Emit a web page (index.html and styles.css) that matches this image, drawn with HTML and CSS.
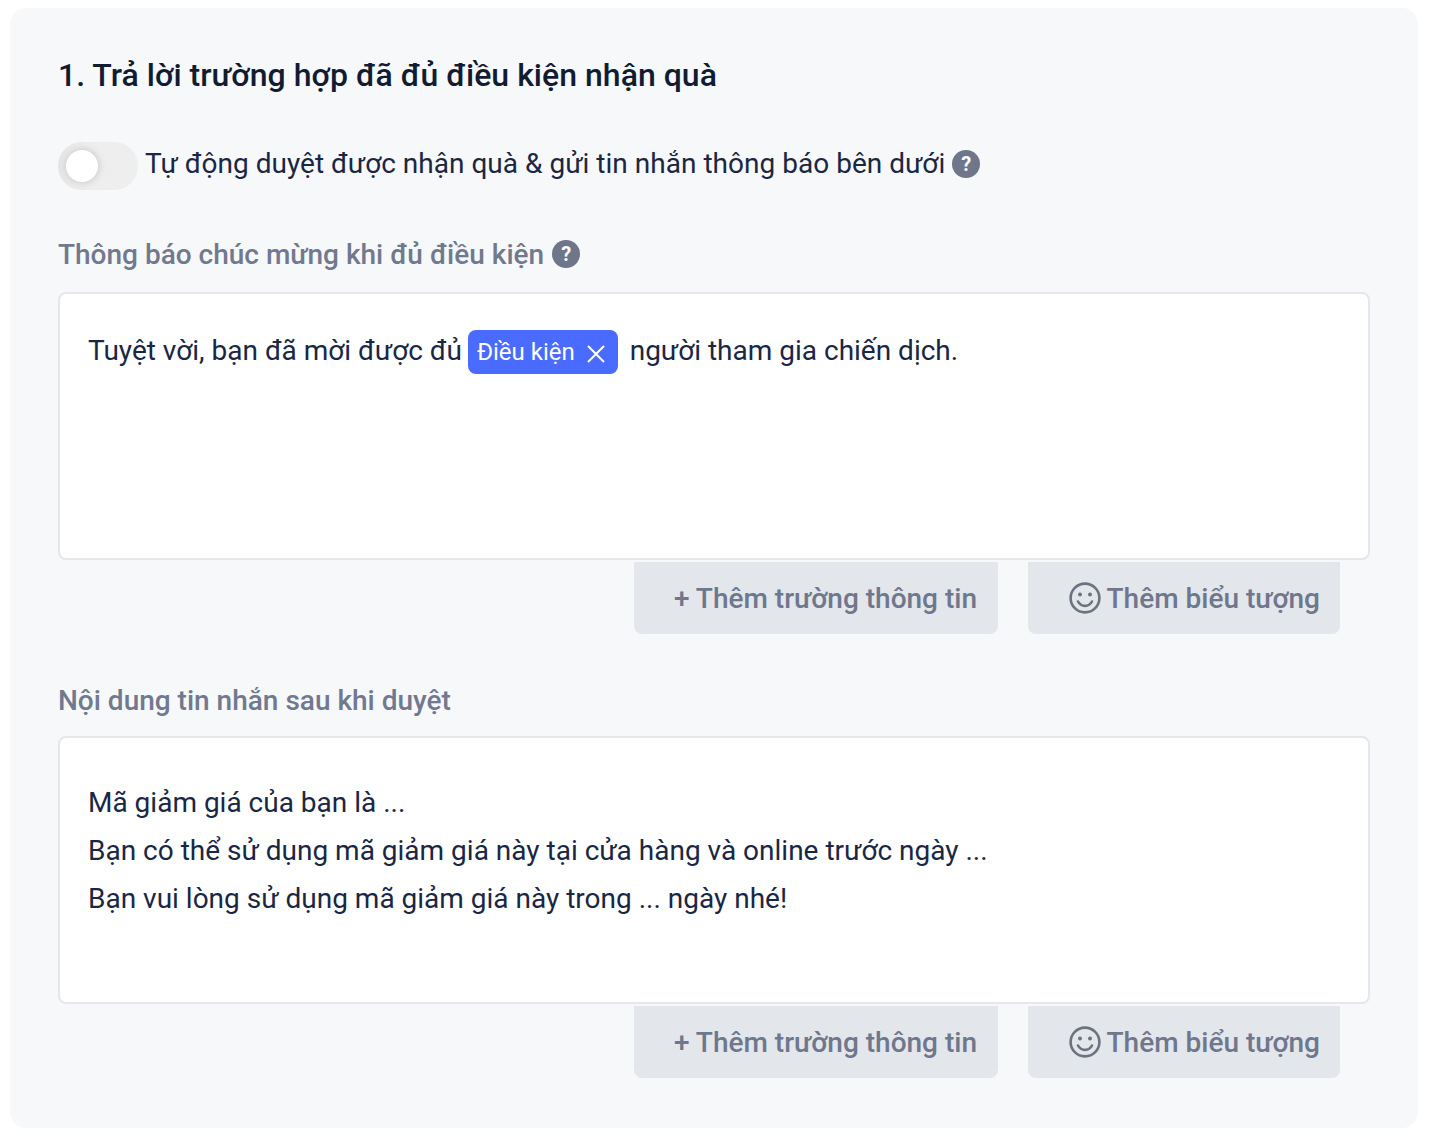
FILE: index.html
```html
<!DOCTYPE html>
<html lang="vi">
<head>
<meta charset="utf-8">
<title>Trả lời</title>
<link rel="stylesheet" href="styles.css">
</head>
<body>
<section class="card">
  <h2 class="title">1. Trả lời trường hợp đã đủ điều kiện nhận quà</h2>
  <div class="toggle-row">
    <span class="toggle"><span class="knob"></span></span>
    <span class="toggle-text">Tự động duyệt được nhận quà &amp; gửi tin nhắn thông báo bên dưới</span>
    <span class="help">?</span>
  </div>
  <div class="label label-first"><span>Thông báo chúc mừng khi đủ điều kiện</span><span class="help">?</span></div>
  <div class="editor editor-first">
    <p class="line">Tuyệt vời, bạn đã mời được đủ <span class="tag">Điều kiện <svg class="tag-x" viewBox="0 0 18 18" width="18" height="18"><path d="M1 1 17 17M17 1 1 17" fill="none" stroke="#fff" stroke-width="2"/></svg></span> người tham gia chiến dịch.</p>
  </div>
  <div class="actions">
    <div class="btn btn-field">+ Thêm trường thông tin</div>
    <div class="btn btn-emoji"><svg class="smile" viewBox="0 0 32 32" width="32" height="32"><circle cx="16" cy="16" r="14.4" fill="none" stroke="#6b7280" stroke-width="2.6"/><circle cx="11" cy="12.6" r="2" fill="#6b7280"/><circle cx="21" cy="12.6" r="2" fill="#6b7280"/><path d="M9 19.5c1.6 3 4 4.4 7 4.4s5.4-1.4 7-4.4" fill="none" stroke="#6b7280" stroke-width="2.6" stroke-linecap="round"/></svg>Thêm biểu tượng</div>
  </div>
  <div class="label label-second"><span>Nội dung tin nhắn sau khi duyệt</span></div>
  <div class="editor editor-second">
    <p class="line">Mã giảm giá của bạn là ...</p>
    <p class="line">Bạn có thể sử dụng mã giảm giá này tại cửa hàng và online trước ngày ...</p>
    <p class="line">Bạn vui lòng sử dụng mã giảm giá này trong ... ngày nhé!</p>
  </div>
  <div class="actions">
    <div class="btn btn-field">+ Thêm trường thông tin</div>
    <div class="btn btn-emoji"><svg class="smile" viewBox="0 0 32 32" width="32" height="32"><circle cx="16" cy="16" r="14.4" fill="none" stroke="#6b7280" stroke-width="2.6"/><circle cx="11" cy="12.6" r="2" fill="#6b7280"/><circle cx="21" cy="12.6" r="2" fill="#6b7280"/><path d="M9 19.5c1.6 3 4 4.4 7 4.4s5.4-1.4 7-4.4" fill="none" stroke="#6b7280" stroke-width="2.6" stroke-linecap="round"/></svg>Thêm biểu tượng</div>
  </div>
</section>
</body>
</html>
```
FILE: styles.css
```css
* { box-sizing: border-box; }
html, body { margin: 0; padding: 0; background: #fff; }
body { padding: 8px 22px 14px 10px; font-family: Roboto, "Liberation Sans", sans-serif; color: #1a2744; }
.card { height: 1120px; background: #f7f8fa; border-radius: 16px; padding: 47px 48px 48px; }
.title { margin: 0; font-size: 32px; line-height: 40px; font-weight: 500; color: #111c33; letter-spacing: .02px; }
.toggle-row { display: flex; align-items: center; margin-top: 47px; height: 48px; font-size: 28px; }
.toggle { width: 80px; height: 48px; border-radius: 24px; background: #eeeeef; display: block; padding: 8px; flex: none; box-shadow: inset 6px 0 8px -6px rgba(0,0,0,.08); }
.knob { display: block; width: 32px; height: 32px; border-radius: 50%; background: #fff; box-shadow: 0 0 8px rgba(0,0,0,.2); }
.toggle-text { margin: 0 0 6px 7px; letter-spacing: .02px; }
.toggle-row .help { margin: 0 0 4px 7px; }
.help { width: 28px; height: 28px; margin-left: 8px; border-radius: 50%; background: #6f7689; color: #fff; font-size: 20px; font-weight: 700; display: flex; align-items: center; justify-content: center; flex: none; }
.label { display: flex; align-items: center; height: 40px; font-size: 28px; font-weight: 500; color: #71798f; }
.label-first { margin-top: 44px; }
.label-second { margin-top: 46px; }
.editor { height: 268px; background: #fff; border: 2px solid #e5e7eb; border-radius: 8px; padding: 0 28px; font-size: 28px; }
.editor-first { margin-top: 18px; padding-top: 36px; }
.editor-second { margin-top: 16px; padding-top: 41px; }
.line { margin: 0; line-height: 48px; white-space: nowrap; }
.editor-first .line { line-height: 42px; }
.tag { display: inline-flex; align-items: center; height: 44px; vertical-align: top; background: #4a6bff; color: #fff; border-radius: 8px; padding: 0 13px 0 9px; margin: 0 5px 0 -1px; font-size: 24px; }
.tag-x { margin-left: 12px; margin-top: 3px; }
.actions { display: flex; justify-content: flex-end; gap: 30px; margin-top: 2px; padding-right: 30px; }
.btn { height: 72px; background: #e3e6eb; border-radius: 0 0 8px 8px; display: flex; align-items: center; justify-content: flex-end; padding-right: 20px; font-size: 28px; font-weight: 500; color: #6f778c; }
.btn-field { width: 364px; padding-right: 21px; }
.btn-emoji { width: 312px; }
.smile { margin-right: 6px; flex: none; }
```
